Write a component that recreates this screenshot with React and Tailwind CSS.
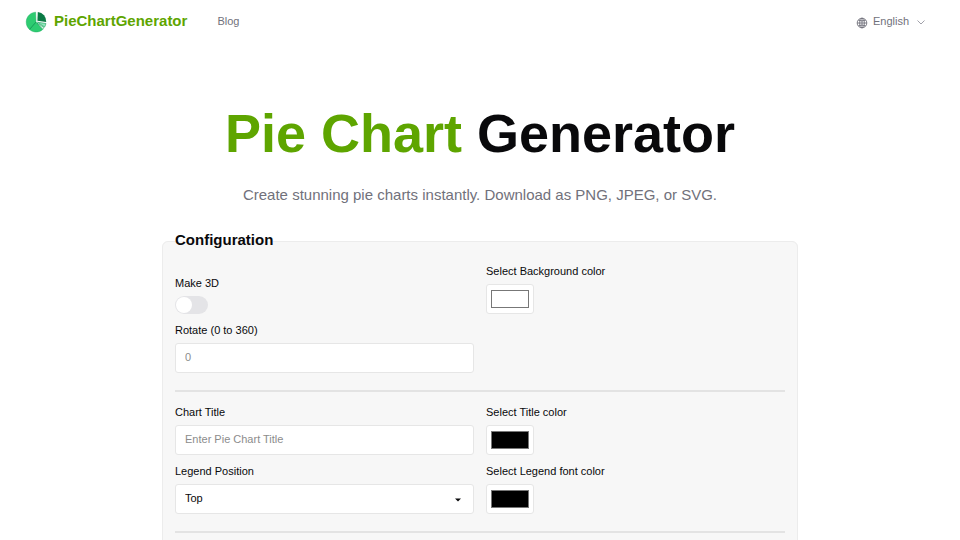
import React, { useState } from 'react'

function Logo() {
  return (
    <svg viewBox="0 0 22 22" className="w-[22px] h-[22px]" aria-hidden="true">
      <path d="M11 11 10.6 1.2A9.9 9.9 0 1 0 17.8 18.4Z" fill="#2ecc71" stroke="#1fae63" strokeWidth="0.5" />
      <path d="M11 11 4.6 18.4" stroke="#129152" strokeWidth="0.8" />
      <path d="M12.4 9.7 12.8 1A9.3 9.3 0 0 1 21.2 11Z" fill="#0b7a45" />
      <path d="M12.4 11.2 20.9 12.5A9.6 9.6 0 0 1 19.6 16Z" fill="#8ee8bb" stroke="#159a58" strokeWidth="0.6" />
      <path d="M12 12 19 16.4A9 9 0 0 1 17.6 18.2Z" fill="#d5f7e5" stroke="#159a58" strokeWidth="0.6" />
    </svg>
  )
}

function Globe() {
  return (
    <svg viewBox="0 0 12 12" className="w-[12px] h-[12px] mt-px" fill="none" stroke="currentColor" strokeWidth="0.9" aria-hidden="true">
      <circle cx="6" cy="6" r="4.8" />
      <ellipse cx="6" cy="6" rx="2.3" ry="4.8" />
      <path d="M6 1.2v9.6M1.2 6h9.6M2.4 3.2q3.6 1.4 7.2 0M2.4 8.8q3.6-1.4 7.2 0" />
    </svg>
  )
}

function Field({ id, label, children }) {
  return (
    <div className="flex flex-col items-start gap-[5px]">
      <label htmlFor={id} className="leading-4">{label}</label>
      {children}
    </div>
  )
}

function ColorInput({ id, value, onChange }) {
  return (
    <input
      id={id}
      type="color"
      value={value}
      onChange={(e) => onChange(e.target.value)}
      className="w-12 h-[30px] px-[2px] py-px bg-white border border-[#e6e6e6] rounded-[3px] cursor-pointer"
    />
  )
}

const inputClass = 'w-full h-[30px] px-[9px] pb-[2px] bg-white border border-[#e6e6e6] rounded-[3px] placeholder:text-[#8c8c8c] outline-none'

export default function App() {
  const [is3d, setIs3d] = useState(false)
  const [rotate, setRotate] = useState('')
  const [title, setTitle] = useState('')
  const [legend, setLegend] = useState('top')
  const [bgColor, setBgColor] = useState('#ffffff')
  const [titleColor, setTitleColor] = useState('#000000')
  const [legendColor, setLegendColor] = useState('#000000')

  return (
    <div className="min-h-screen bg-white text-[11px] text-[#09090b] font-['Liberation_Sans',Arial,sans-serif]">
      <header className="h-11 pl-[25px] pr-[34px] flex items-center justify-between">
        <div className="flex items-center gap-[30px]">
          <a href="/" className="flex items-center gap-[7px] text-[15px] font-bold text-[#5ea500]">
            <Logo />
            <span className="pb-px">PieChartGenerator</span>
          </a>
          <a href="/blog" className="pb-[2px] text-[#71717b]">Blog</a>
        </div>
        <button type="button" className="flex items-center gap-[5px] text-[#71717b] cursor-pointer">
          <Globe />
          <span className="pb-[2px]">English</span>
          <svg viewBox="0 0 10 10" className="w-[10px] h-[10px] ml-[2px]" fill="none" stroke="#a1a1aa" aria-hidden="true">
            <path d="M1.5 3.5 5 7 8.5 3.5" />
          </svg>
        </button>
      </header>

      <section className="pt-[59px] px-4 text-center">
        <h1 className="text-[54px] leading-[60px] font-bold">
          <span className="text-[#5ea500]">Pie Chart</span> Generator
        </h1>
        <p className="mt-5 text-[15px] leading-6 text-[#71717b]">
          Create stunning pie charts instantly. Download as PNG, JPEG, or SVG.
        </p>
      </section>

      <main className="max-w-[636px] mx-auto mt-[22px]">
        <fieldset className="px-3 pb-4 bg-[#f7f7f7] border border-[#ececec] rounded-md">
          <legend className="pb-[2px] text-[15px] leading-[22px] font-bold">Configuration</legend>

          <div className="mt-[10px] grid grid-cols-2 gap-x-3">
            <div className="pt-3 flex flex-col gap-2">
              <Field id="make3d" label="Make 3D">
                <input
                  id="make3d"
                  type="checkbox"
                  role="switch"
                  checked={is3d}
                  onChange={(e) => setIs3d(e.target.checked)}
                  className="appearance-none flex items-center w-[33px] h-[18px] px-px rounded-full bg-[#e4e4e7] checked:bg-[#5ea500] checked:justify-end cursor-pointer before:block before:w-4 before:h-4 before:rounded-full before:bg-white"
                />
              </Field>
              <Field id="rotate" label="Rotate (0 to 360)">
                <input
                  id="rotate"
                  type="number"
                  min="0"
                  max="360"
                  placeholder="0"
                  value={rotate}
                  onChange={(e) => setRotate(e.target.value)}
                  className={inputClass}
                />
              </Field>
            </div>
            <Field id="bg-color" label="Select Background color">
              <ColorInput id="bg-color" value={bgColor} onChange={setBgColor} />
            </Field>
          </div>

          <hr className="mt-[17px] mb-3 border-t-2 border-[#e3e3e3]" />

          <div className="grid grid-cols-2 gap-x-3 gap-y-2">
            <Field id="title" label="Chart Title">
              <input
                id="title"
                type="text"
                placeholder="Enter Pie Chart Title"
                value={title}
                onChange={(e) => setTitle(e.target.value)}
                className={inputClass}
              />
            </Field>
            <Field id="title-color" label="Select Title color">
              <ColorInput id="title-color" value={titleColor} onChange={setTitleColor} />
            </Field>
            <Field id="legend" label="Legend Position">
              <div className="relative w-full">
                <select
                  id="legend"
                  value={legend}
                  onChange={(e) => setLegend(e.target.value)}
                  className={`${inputClass} appearance-none cursor-pointer`}
                >
                  <option value="top">Top</option>
                  <option value="bottom">Bottom</option>
                  <option value="left">Left</option>
                  <option value="right">Right</option>
                </select>
                <svg viewBox="0 0 6 4" className="absolute right-[13px] top-[14px] w-[6px] h-[4px] pointer-events-none" aria-hidden="true">
                  <path d="M0 .5h6L3 3.5Z" fill="#09090b" />
                </svg>
              </div>
            </Field>
            <Field id="legend-color" label="Select Legend font color">
              <ColorInput id="legend-color" value={legendColor} onChange={setLegendColor} />
            </Field>
          </div>

          <hr className="mt-[17px] border-t-2 border-[#e3e3e3]" />
        </fieldset>
      </main>
    </div>
  )
}
